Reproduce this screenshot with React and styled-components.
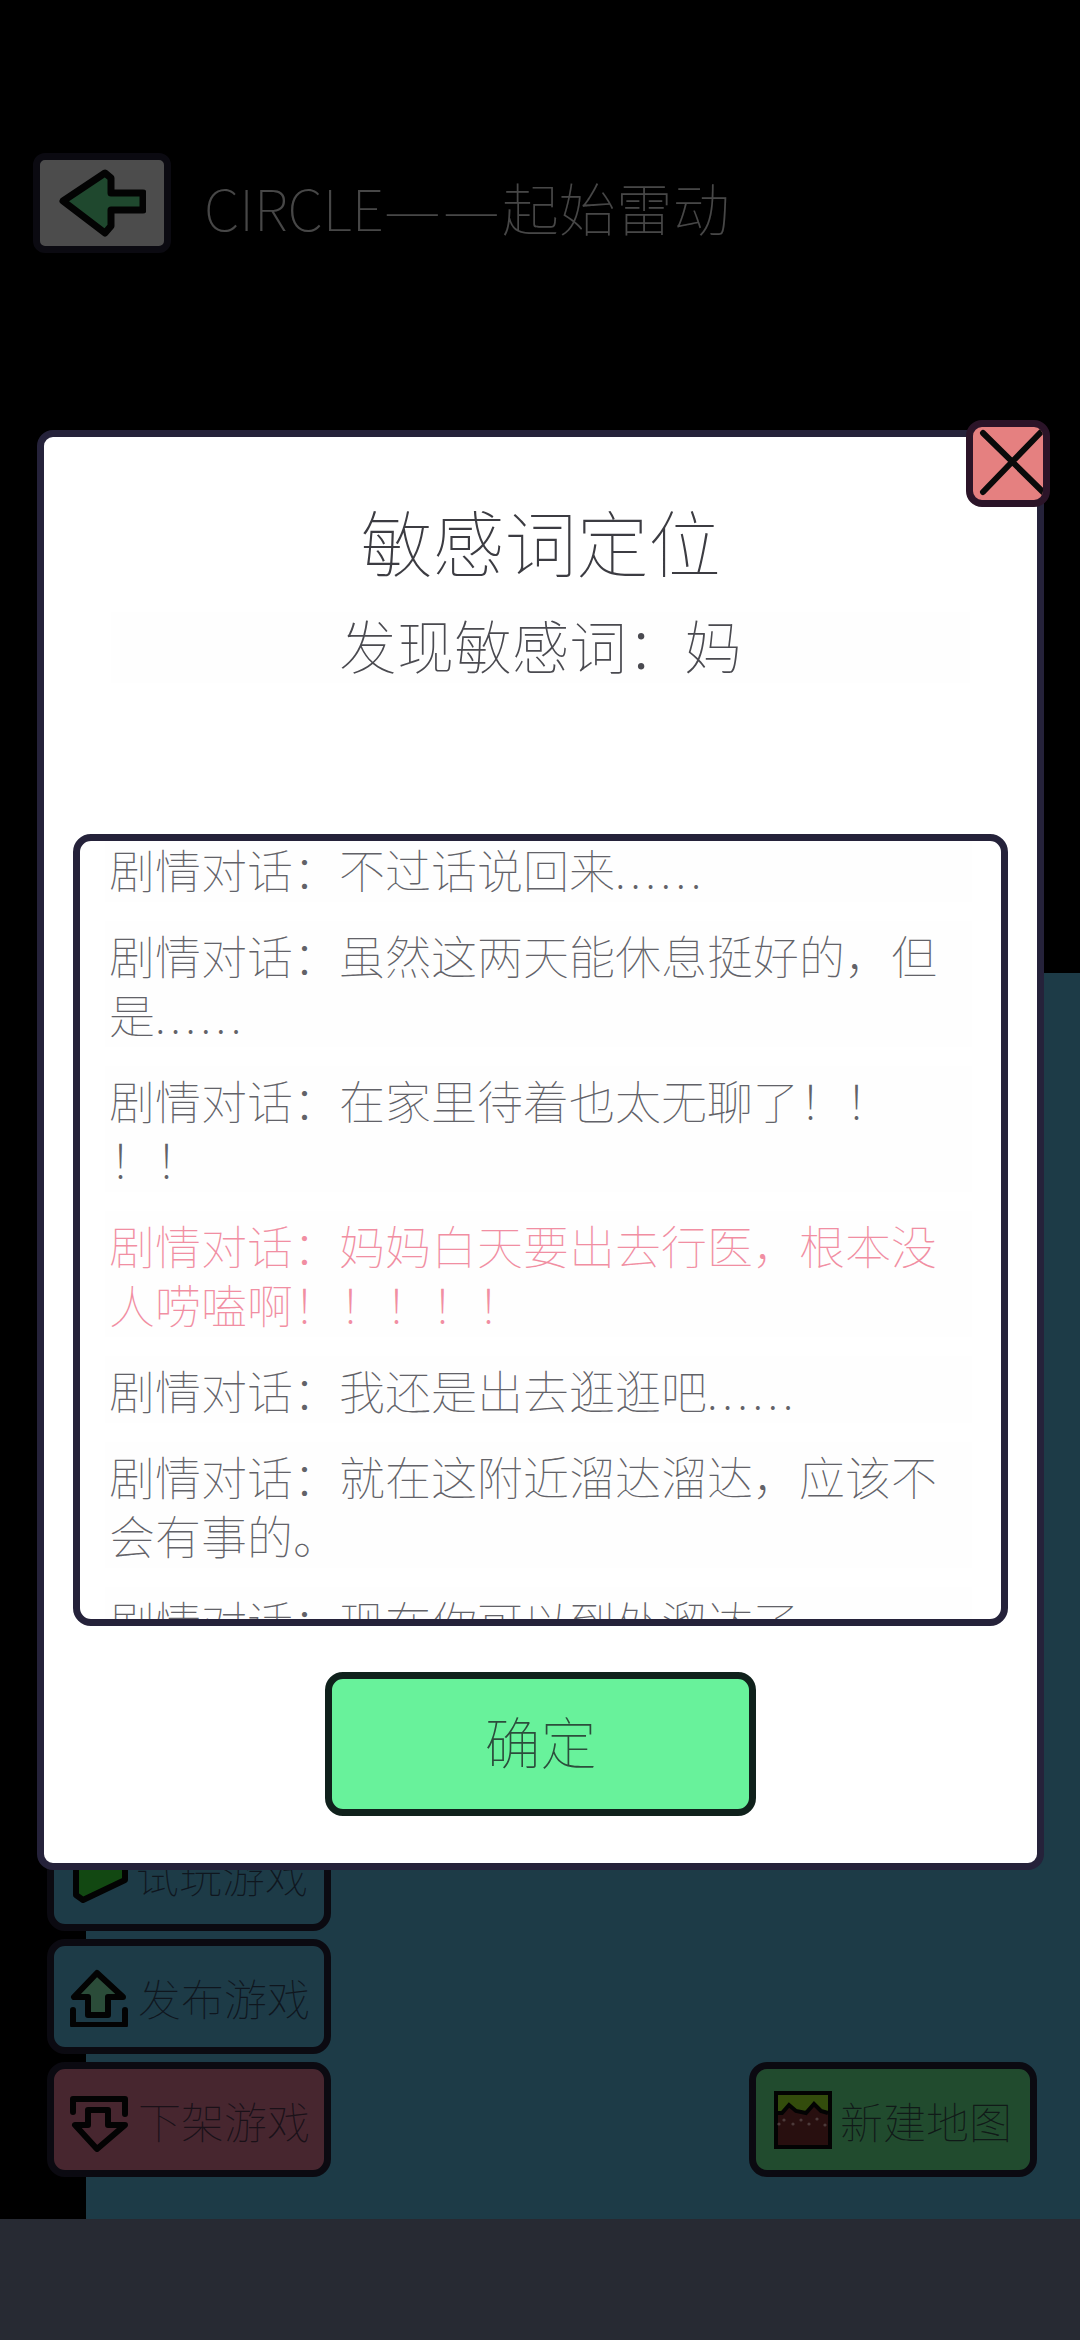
import React from "react";
import styled, { createGlobalStyle } from "styled-components";

const Global = createGlobalStyle`
  html, body { margin: 0; padding: 0; background: #000; }
  * { box-sizing: border-box; }
  #root { width: 1080px; height: 2340px; }
  body { font-family: "Noto Sans CJK SC", "Noto Sans", sans-serif; font-weight: 100; }
`;

const Screen = styled.div`
  width: 1080px;
  height: 2340px;
  display: flex;
  flex-direction: column;
  overflow: hidden;
`;
const Stage = styled.div`
  position: relative;
  flex: 1;
  display: flex;
  flex-direction: column;
  background: #000;
`;
const NavBar = styled.div`
  height: 121px;
  background: #272a33;
`;
const Header = styled.header`
  display: flex;
  align-items: center;
  gap: 33px;
  margin: 153px 0 0 33px;
`;
const BackButton = styled.button`
  width: 138px;
  height: 100px;
  padding: 0;
  border: 7px solid #25223a;
  border-radius: 12px;
  background: #fff;
  display: flex;
  align-items: center;
  justify-content: center;
`;
const PageTitle = styled.h1`
  margin: 0;
  padding-top: 5px;
  font-size: 57px;
  line-height: 80px;
  font-weight: 100;
  color: #eee;
`;
const TitleDash = styled.span`
  display: inline-block;
  width: 59px;
  transform: scaleX(1.13);
  transform-origin: left center;
`;
const Workspace = styled.main`
  margin: auto 0 0 86px;
  height: 1246px;
  padding: 0 43px 42px 0;
  background: #61c5ed;
  display: flex;
  align-items: flex-end;
  justify-content: space-between;
`;
const ToolColumn = styled.div`
  margin-left: -39px;
  display: flex;
  flex-direction: column;
  gap: 8px;
`;
const ToolButton = styled.button`
  width: ${(p) => p.$width}px;
  height: 115px;
  padding: 0 0 0 ${(p) => p.$inset}px;
  border: 7px solid #25223a;
  border-radius: 18px;
  background: ${(p) => p.$tone};
  display: flex;
  align-items: center;
  gap: 8px;
  font: inherit;
  font-size: 43px;
  font-weight: 100;
  color: rgba(37, 34, 58, 0.75);
  white-space: nowrap;
`;
const Overlay = styled.div`
  position: absolute;
  inset: 0;
  padding: 430px 0 0 37px;
  background: rgba(0, 0, 0, 0.7);
`;
const Modal = styled.section`
  position: relative;
  width: 1007px;
  height: 1440px;
  border: 7px solid #25223a;
  border-radius: 16px;
  background: #fff;
  display: flex;
  flex-direction: column;
  align-items: center;
`;
const CloseButton = styled.button`
  position: absolute;
  top: -17px;
  right: -13px;
  width: 84px;
  height: 87px;
  padding: 0;
  border: 7px solid #2b1428;
  border-radius: 16px;
  background: #e58080;
  overflow: hidden;
`;
const ModalTitle = styled.h2`
  margin: 58px 0 0;
  font-size: 72px;
  line-height: 90px;
  font-weight: 100;
  color: #3c3c42;
`;
const Subtitle = styled.p`
  margin: 27px 0 0;
  width: 859px;
  height: 71px;
  background: #fefefe;
  font-size: 57.5px;
  line-height: 64px;
  text-align: center;
  color: #4a4a50;
`;
const DialogueList = styled.div`
  margin-top: 151px;
  width: 935px;
  height: 792px;
  flex: none;
  border: 7px solid #25223a;
  border-radius: 18px;
  padding: 0 29px 0 25px;
  overflow: hidden;
  display: flex;
  flex-direction: column;
  gap: 19px;
`;
const Row = styled.div`
  flex: none;
  padding: 4px;
  background: #fefefe;
  font-size: 46px;
  line-height: 59px;
  white-space: nowrap;
  color: ${(p) => (p.$hit ? "#f18ea2" : "#626268")};
  &:first-child {
    margin-top: -6px;
  }
`;
const Line = styled.span`
  display: block;
`;
const Dots = styled.span`
  letter-spacing: 4.5px;
`;
const ConfirmButton = styled.button`
  margin-top: 46px;
  width: 431px;
  height: 144px;
  flex: none;
  padding: 0 0 10px;
  border: 7px solid #10211c;
  border-radius: 18px;
  background: #68f29b;
  font: inherit;
  font-size: 56px;
  font-weight: 100;
  color: #2c4d3c;
`;

const rows = [
  { lines: ["剧情对话：不过话说回来......"] },
  { lines: ["剧情对话：虽然这两天能休息挺好的，但", "是......"] },
  { lines: ["剧情对话：在家里待着也太无聊了！！", "！！"] },
  { lines: ["剧情对话：妈妈白天要出去行医，根本没", "人唠嗑啊！！！！！"], hit: true },
  { lines: ["剧情对话：我还是出去逛逛吧......"] },
  { lines: ["剧情对话：就在这附近溜达溜达，应该不", "会有事的。"] },
  { lines: ["剧情对话：现在你可以到处溜达了。"] },
];

const withDots = (text) =>
  text.split(/(\.{6})/).map((part, i) => (part === "......" ? <Dots key={i}>{part}</Dots> : part));

const Stroke = { stroke: "#0a0a0a", strokeWidth: 6, strokeLinejoin: "round", strokeLinecap: "round" };

const BackIcon = () => (
  <svg width="88" height="70" viewBox="0 0 88 70">
    <path d="M5 33 47 5 53 10V25H85V42H53V58L47 65Z" fill="#68f29b" {...Stroke} strokeWidth="7" />
  </svg>
);
const CloseIcon = () => (
  <svg width="70" height="73" viewBox="0 0 70 73" style={{ display: "block" }}>
    <path d="M10 6 70 65M68 5 10 65" fill="none" {...Stroke} />
  </svg>
);
const PlayIcon = () => (
  <svg width="56" height="60" viewBox="0 0 56 60">
    <path d="M4 6 11 4 53 24V36L11 56 4 51Z" fill="#3cf03c" {...Stroke} />
  </svg>
);
const UploadIcon = () => (
  <svg width="60" height="60" viewBox="0 0 60 60">
    <path d="M27 6 4 30H18V48H38V30H53Z" fill="#8fffbe" {...Stroke} />
    <path d="M3 43V58H55V43" fill="none" {...Stroke} />
  </svg>
);
const DownloadIcon = () => (
  <svg width="60" height="65" viewBox="0 0 60 65">
    <path d="M27 62 5 38H18V23H38V38H55Z" fill="none" {...Stroke} />
    <path d="M3 25V12H55V27" fill="none" {...Stroke} />
  </svg>
);
const MapIcon = () => (
  <svg width="58" height="58" viewBox="0 0 58 58">
    <rect x="2" y="2" width="54" height="54" fill="#853232" stroke="#0a0a0a" strokeWidth="4" />
    <path d="M4 4H54V22L47 20 40 13 32 22 22 20 15 14 8 22H4Z" fill="#aaff2b" />
    <path d="M4 22H8L15 14 22 20 32 22 40 13 47 20 54 22" fill="none" stroke="#0a0a0a" strokeWidth="4" />
    <g fill="#ffc4c4">
      {[[5, 33], [10, 29], [19, 33], [27, 29], [35, 33], [43, 28], [51, 34]].map(([x, y]) => (
        <circle key={x} cx={x} cy={y} r="1.6" />
      ))}
    </g>
  </svg>
);

export default function App() {
  return (
    <Screen>
      <Global />
      <Stage>
        <Header>
          <BackButton>
            <BackIcon />
          </BackButton>
          <PageTitle>
            CIRCLE<TitleDash>—</TitleDash><TitleDash>—</TitleDash>起始雷动
          </PageTitle>
        </Header>
        <Workspace>
          <ToolColumn>
            <ToolButton $width={284} $inset={18} $tone="#61c5ed">
              <PlayIcon />试玩游戏
            </ToolButton>
            <ToolButton $width={284} $inset={16} $tone="#61c5ed">
              <UploadIcon />发布游戏
            </ToolButton>
            <ToolButton $width={284} $inset={16} $tone="#ed7f9d">
              <DownloadIcon />下架游戏
            </ToolButton>
          </ToolColumn>
          <ToolButton $width={288} $inset={18} $tone="#71fa99">
            <MapIcon />新建地图
          </ToolButton>
        </Workspace>
        <Overlay>
          <Modal>
            <CloseButton>
              <CloseIcon />
            </CloseButton>
            <ModalTitle>敏感词定位</ModalTitle>
            <Subtitle>发现敏感词：妈</Subtitle>
            <DialogueList>
              {rows.map((r) => (
                <Row key={r.lines[0]} $hit={r.hit}>
                  {r.lines.map((l) => (
                    <Line key={l}>{withDots(l)}</Line>
                  ))}
                </Row>
              ))}
            </DialogueList>
            <ConfirmButton>确定</ConfirmButton>
          </Modal>
        </Overlay>
      </Stage>
      <NavBar />
    </Screen>
  );
}
